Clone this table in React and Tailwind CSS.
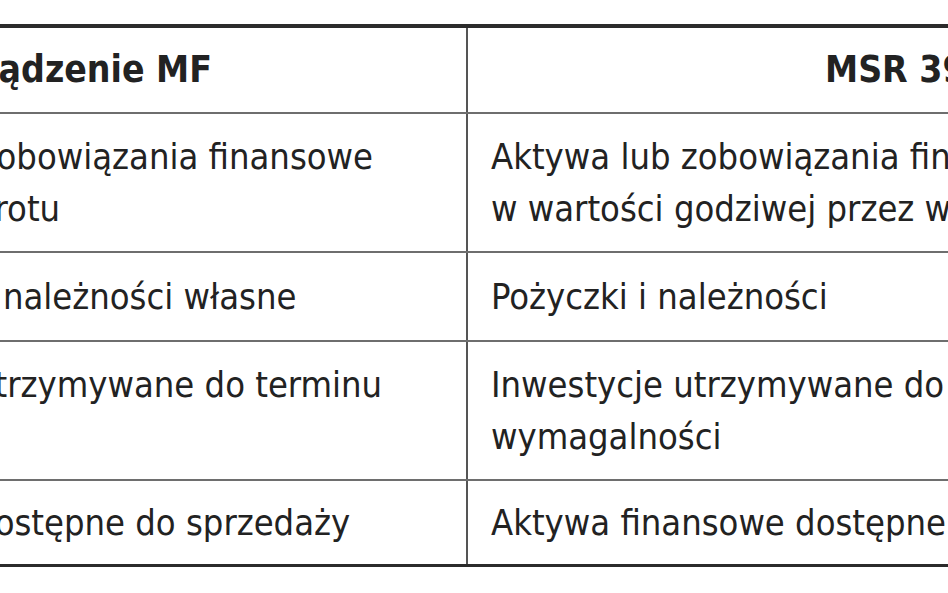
import React from 'react'

// left column is cropped by the frame: each line is right-anchored where its visible end sits
const rows = [
  {
    h: 'h-[139px]',
    left: [
      ['Aktywa lub zobowiązania finansowe', 'pr-[93px]'],
      ['przeznaczone do obrotu', 'pr-[426px]'],
    ],
    right: ['Aktywa lub zobowiązania finansowe wyceniane', 'w wartości godziwej przez wynik finansowy'],
  },
  {
    h: 'h-[89px]',
    left: [['Pożyczki udzielone i należności własne', 'pr-[183px]']],
    right: ['Pożyczki i należności'],
  },
  {
    h: 'h-[139px]',
    left: [
      ['Aktywa finansowe utrzymywane do terminu', 'pr-[108px]'],
      ['wymagalności', 'pr-[480px]'],
    ],
    right: ['Inwestycje utrzymywane do terminu', 'wymagalności'],
  },
  {
    h: 'h-[83px]',
    left: [['Aktywa finansowe dostępne do sprzedaży', 'pr-[136px]']],
    right: ['Aktywa finansowe dostępne do sprzedaży'],
    last: true,
  },
]

export default function App() {
  return (
    <div
      className="w-[948px] h-[593px] overflow-hidden bg-white pt-[24px] text-[#222]"
      style={{ fontFamily: '"DejaVu Sans Condensed", "Liberation Sans", sans-serif' }}
    >
      <div className="ml-[-330px] w-[1500px] border-t-4 border-b-[3px] border-[#2b2b2b] text-[36px]">
        {/* header */}
        <div className="flex h-[86px] border-b-2 border-[#6e6e6e] text-[37px] font-bold">
          <div className="w-[796px] shrink-0 flex items-center justify-end pr-[254px] whitespace-nowrap">
            Rozporządzenie MF
          </div>
          <div className="flex-1 flex items-center pl-[357px] border-l-2 border-[#555]">MSR 39</div>
        </div>

        {rows.map((r, i) => (
          <div key={i} className={`flex ${r.h} ${r.last ? '' : 'border-b-2 border-[#6e6e6e]'}`}>
            <div className="w-[796px] shrink-0 flex flex-col justify-center leading-[52px] whitespace-nowrap">
              {r.left.map(([t, pr], j) => (
                <div key={j} className={`text-right ${pr}`}>
                  {t}
                </div>
              ))}
            </div>
            <div className="flex-1 flex flex-col justify-center pl-[23px] border-l-2 border-[#555] leading-[52px] whitespace-nowrap">
              {r.right.map((t, j) => (
                <div key={j}>{t}</div>
              ))}
            </div>
          </div>
        ))}
      </div>
    </div>
  )
}
